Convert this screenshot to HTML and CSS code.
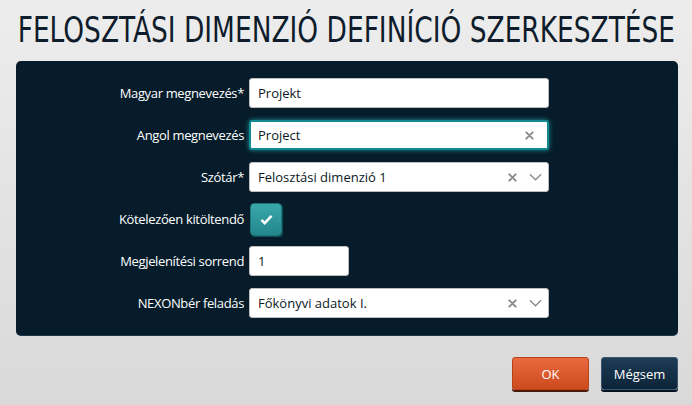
FILE: index.html
```html
<!DOCTYPE html>
<html lang="hu">
<head>
<meta charset="utf-8">
<link rel="stylesheet" href="styles.css">
</head>
<body>
<div class="page">
  <div class="head"><h1 class="title">FELOSZTÁSI DIMENZIÓ DEFINÍCIÓ SZERKESZTÉSE</h1></div>
  <div class="panel">
    <div class="row">
      <label class="lbl">Magyar megnevezés*</label>
      <div class="field wide"><span class="val">Projekt</span></div>
    </div>
    <div class="row">
      <label class="lbl">Angol megnevezés</label>
      <div class="field wide focus"><span class="val">Project</span>
        <span class="icons"><svg class="x" viewBox="0 0 10 10" width="9" height="9"><path d="M1.5 1.5L8.5 8.5M8.5 1.5L1.5 8.5" stroke="#8c8c8c" stroke-width="2.2" stroke-linecap="round"/></svg></span>
      </div>
    </div>
    <div class="row">
      <label class="lbl">Szótár*</label>
      <div class="field wide sel"><span class="val">Felosztási dimenzió 1</span>
        <span class="icons"><svg class="x" viewBox="0 0 10 10" width="9" height="9"><path d="M1.5 1.5L8.5 8.5M8.5 1.5L1.5 8.5" stroke="#8c8c8c" stroke-width="2.2" stroke-linecap="round"/></svg><svg class="chev" viewBox="0 0 14 8" width="13" height="8"><path d="M1 1L7 7L13 1" fill="none" stroke="#8c8c8c" stroke-width="1.5"/></svg></span>
      </div>
    </div>
    <div class="row">
      <label class="lbl">Kötelezően kitöltendő</label>
      <div class="check"><svg viewBox="0 0 14 12" width="13" height="11"><path d="M1.5 6.5L5 10L12.5 2" fill="none" stroke="#fff" stroke-width="2.8"/></svg></div>
    </div>
    <div class="row">
      <label class="lbl">Megjelenítési sorrend</label>
      <div class="field short"><span class="val">1</span></div>
    </div>
    <div class="row">
      <label class="lbl">NEXONbér feladás</label>
      <div class="field wide sel"><span class="val">Főkönyvi adatok I.</span>
        <span class="icons"><svg class="x" viewBox="0 0 10 10" width="9" height="9"><path d="M1.5 1.5L8.5 8.5M8.5 1.5L1.5 8.5" stroke="#8c8c8c" stroke-width="2.2" stroke-linecap="round"/></svg><svg class="chev" viewBox="0 0 14 8" width="13" height="8"><path d="M1 1L7 7L13 1" fill="none" stroke="#8c8c8c" stroke-width="1.5"/></svg></span>
      </div>
    </div>
  </div>
  <div class="actions">
    <button class="btn ok">OK</button>
    <button class="btn cancel">Mégsem</button>
  </div>
</div>
</body>
</html>
```
FILE: styles.css
```css
html, body { margin: 0; padding: 0; }
body {
  width: 692px; height: 405px; overflow: hidden;
  background: linear-gradient(#ededed, #d9d9d9);
  font-family: "Open Sans", "Noto Sans", sans-serif;
}
.page { padding: 0 14px 0 16px; }
.head { height: 61px; overflow: hidden; white-space: nowrap; }
.title {
  display: inline-block; margin: 0; padding: 12px 0 0 2px;
  font-family: "DejaVu Sans Condensed", sans-serif;
  font-weight: normal; font-size: 35px; line-height: 36px;
  color: #0e1c2b; transform: scaleX(0.84); transform-origin: 0 0;
}
.panel {
  background: #061c2a;
  border-radius: 5px;
  border-bottom: 1px solid #1d3a50;
  height: 275px; box-sizing: border-box;
  padding: 17px 0 0 0;
  display: flex; flex-direction: column; gap: 12px;
}
.row { display: flex; align-items: center; height: 30px; }
.lbl {
  width: 228px; text-align: right; padding-right: 5px;
  color: #fff; font-size: 13px; letter-spacing: -0.35px;
}
.field {
  height: 30px; box-sizing: border-box;
  background: #fff; border: 1px solid #bfbfbf; border-radius: 3px;
  display: flex; align-items: center; padding: 0 8px;
  font-size: 13px; color: #0b1826;
}
.wide { width: 300px; }
.short { width: 100px; }
.sel { padding-right: 6px; }
.focus { border: 2px solid #138a91; box-shadow: 0 0 5px #1a8c94; padding: 0 13px 0 7px; }
.val { flex: 1; }
.icons { display: flex; align-items: center; gap: 12px; }
.check {
  width: 32px; height: 33px; margin-left: 1px; box-sizing: border-box;
  background: linear-gradient(#3aa8aa, #22878c);
  border: 1px solid #1d7479; border-radius: 4px;
  box-shadow: 1px 1px 0 #0f4f55;
  display: flex; align-items: center; justify-content: center;
}
.actions { display: flex; justify-content: flex-end; gap: 12px; margin-top: 21px; }
.btn {
  width: 77px; height: 33px; border-radius: 3px;
  font-family: "Open Sans", sans-serif; font-size: 13px; color: #fff;
}
.ok { background: linear-gradient(#ea6a3f, #cc4a1e); border: 1px solid #b84118; box-shadow: 0 2px 0 #4a1a0a; }
.cancel { background: linear-gradient(#1d3c56, #0c2438); border: 1px solid #3a5670; box-shadow: 0 2px 0 #06121d; }
```
